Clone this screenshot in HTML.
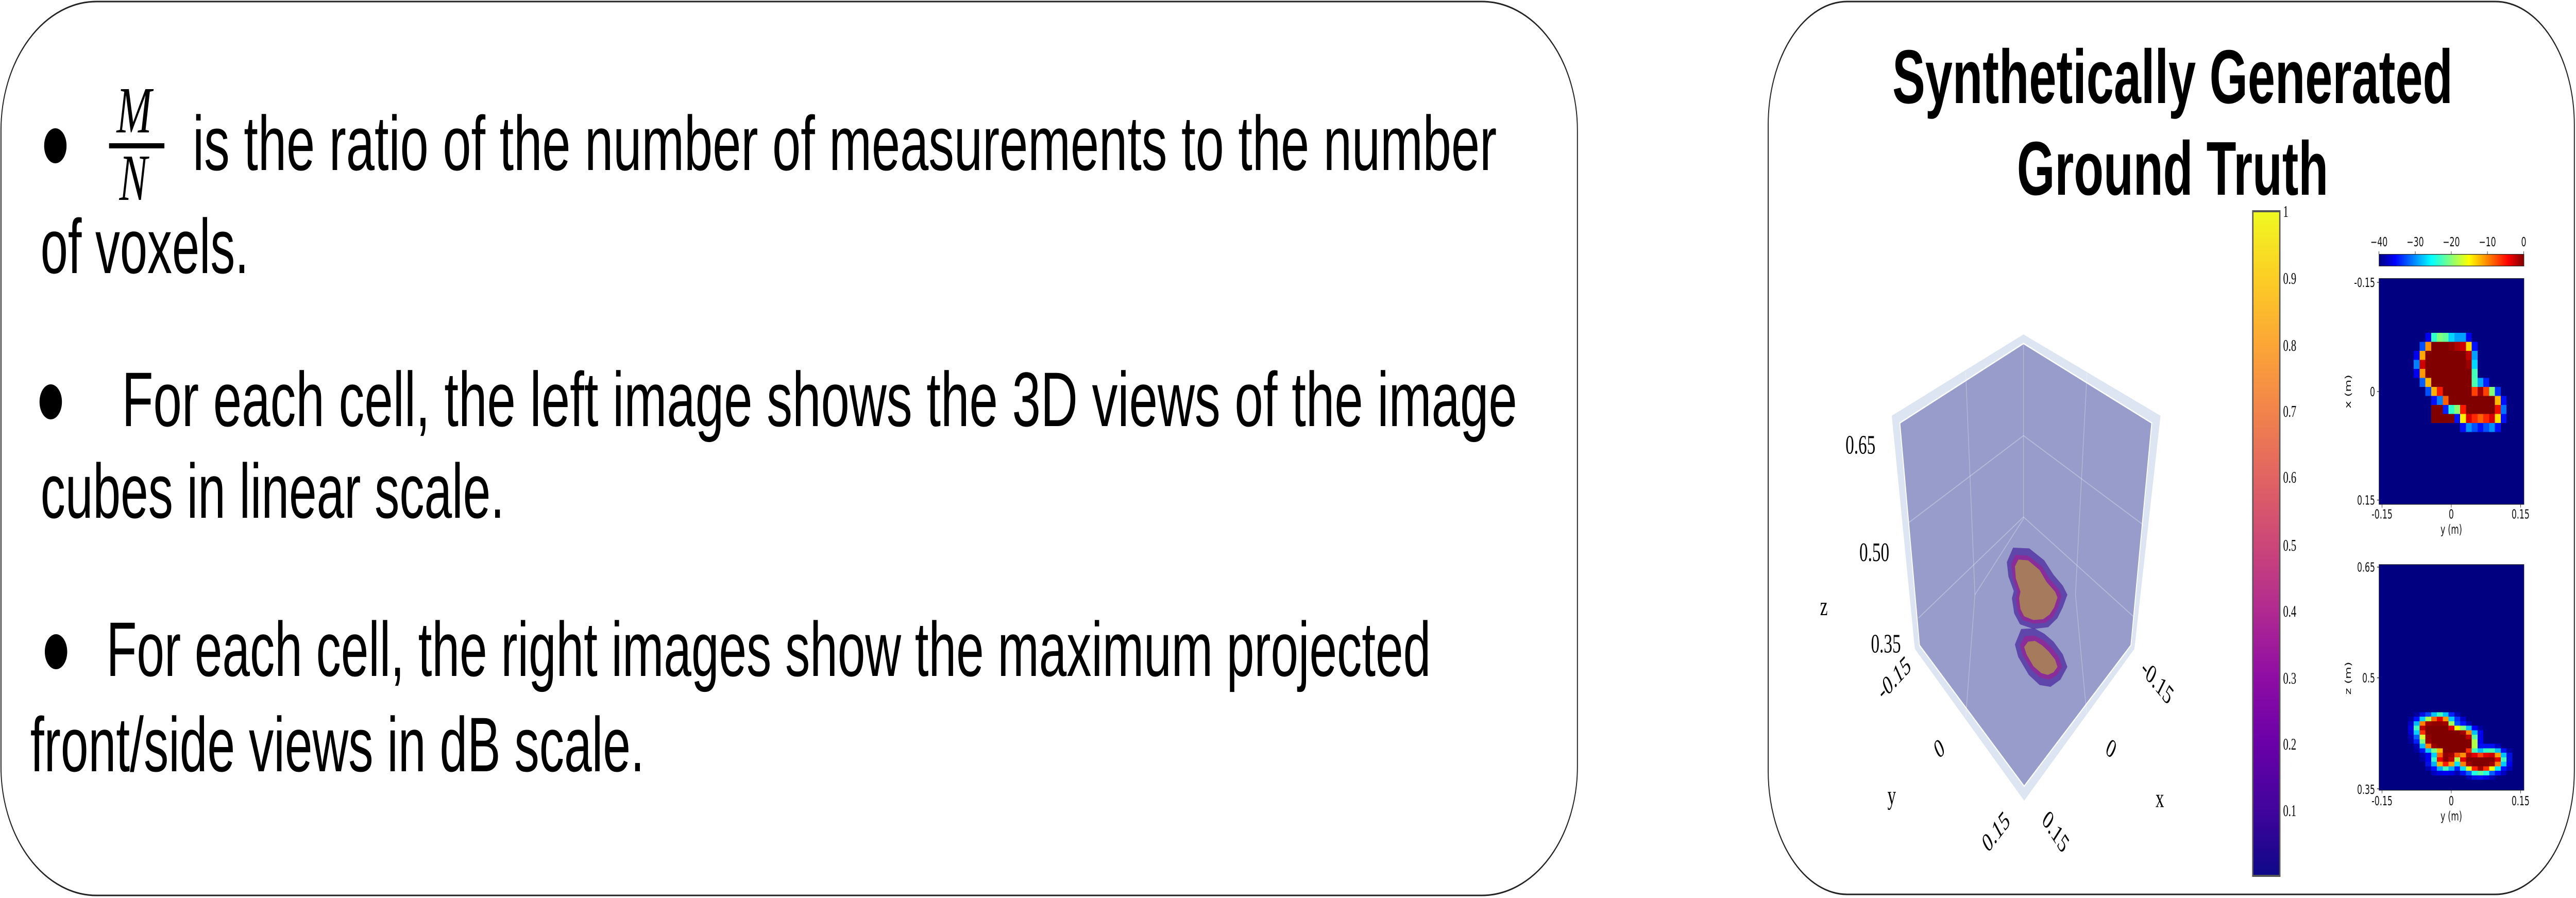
<!DOCTYPE html>
<html><head><meta charset="utf-8"><style>
html,body{margin:0;padding:0;background:#fff;width:100%;height:100%;overflow:hidden;}
svg text{font-family:"Liberation Sans",sans-serif;}
#root{display:block;width:100vw;height:100vh;}
</style></head><body>
<svg id="root" viewBox="0 0 7819 1743" preserveAspectRatio="none" xmlns="http://www.w3.org/2000/svg">
<defs>
<linearGradient id="plasma" x1="0" y1="1" x2="0" y2="0">
<stop offset="0" stop-color="#0d0887"/><stop offset=".1" stop-color="#41049d"/><stop offset=".2" stop-color="#6a00a8"/><stop offset=".3" stop-color="#8f0da4"/><stop offset=".4" stop-color="#b12a90"/><stop offset=".5" stop-color="#cc4778"/><stop offset=".6" stop-color="#e16462"/><stop offset=".7" stop-color="#f2844b"/><stop offset=".8" stop-color="#fca636"/><stop offset=".9" stop-color="#fcce25"/><stop offset="1" stop-color="#f0f921"/>
</linearGradient>
<linearGradient id="jet" x1="0" y1="0" x2="1" y2="0">
<stop offset="0" stop-color="#00007f"/><stop offset=".11" stop-color="#0000ff"/><stop offset=".36" stop-color="#00ffff"/><stop offset=".62" stop-color="#ffff00"/><stop offset=".89" stop-color="#ff0000"/><stop offset="1" stop-color="#7f0000"/>
</linearGradient>
</defs>
<rect width="7819" height="1743" fill="#fff"/>
<rect x="3" y="3" width="4785" height="1735" rx="290" ry="250" fill="#fff" stroke="#222" stroke-width="3"/>
<rect x="5367" y="3" width="2447" height="1733" rx="240" ry="240" fill="#fff" stroke="#222" stroke-width="3"/>

<!-- left text -->
<circle cx="168" cy="283" r="34" fill="#000"/>
<text x="354" y="257" font-size="128" font-style="italic" style="font-family:'Liberation Serif',serif">M</text>
<rect x="331" y="278" width="168" height="10" fill="#000"/>
<text x="362" y="388" font-size="128" font-style="italic" style="font-family:'Liberation Serif',serif">N</text>
<text x="585" y="330" font-size="150" textLength="3958" lengthAdjust="spacingAndGlyphs">is the ratio of the number of measurements to the number</text>
<text x="123" y="530" font-size="150" textLength="632" lengthAdjust="spacingAndGlyphs">of voxels.</text>
<circle cx="154" cy="780" r="34" fill="#000"/>
<text x="370" y="827" font-size="150" textLength="4235" lengthAdjust="spacingAndGlyphs">For each cell, the left image shows the 3D views of the image</text>
<text x="123" y="1005" font-size="150" textLength="1408" lengthAdjust="spacingAndGlyphs">cubes in linear scale.</text>
<circle cx="170" cy="1265" r="34" fill="#000"/>
<text x="323" y="1312" font-size="150" textLength="4020" lengthAdjust="spacingAndGlyphs">For each cell, the right images show the maximum projected</text>
<text x="92" y="1497" font-size="150" textLength="1864" lengthAdjust="spacingAndGlyphs">front/side views in dB scale.</text>

<!-- title -->
<text x="5744" y="200" font-size="148" font-weight="bold" textLength="1701" lengthAdjust="spacingAndGlyphs">Synthetically Generated</text>
<text x="6122" y="378" font-size="148" font-weight="bold" textLength="945" lengthAdjust="spacingAndGlyphs">Ground Truth</text>

<!-- plasma colorbar -->
<rect x="6838" y="410" width="82" height="1290" fill="url(#plasma)" stroke="#555" stroke-width="4"/>
<g font-size="32">
<text x="6930" y="421" style="font-family:'Liberation Serif',serif">1</text>
<text x="6930" y="551" style="font-family:'Liberation Serif',serif">0.9</text>
<text x="6930" y="681" style="font-family:'Liberation Serif',serif">0.8</text>
<text x="6930" y="809" style="font-family:'Liberation Serif',serif">0.7</text>
<text x="6930" y="937" style="font-family:'Liberation Serif',serif">0.6</text>
<text x="6930" y="1069" style="font-family:'Liberation Serif',serif">0.5</text>
<text x="6930" y="1197" style="font-family:'Liberation Serif',serif">0.4</text>
<text x="6930" y="1327" style="font-family:'Liberation Serif',serif">0.3</text>
<text x="6930" y="1455" style="font-family:'Liberation Serif',serif">0.2</text>
<text x="6930" y="1584" style="font-family:'Liberation Serif',serif">0.1</text>
</g>

<!-- cube -->
<svg x="5500" y="600" width="1100" height="1100" viewBox="0 0 1568 1568">
<polygon points="915,70 1508,295 1395,940 918,1360 445,940 345,295" fill="#dde5f2"/>
<polygon points="915,95 1470,315 1380,930 918,1320 465,930 380,315" fill="#979cca" stroke="#fff" stroke-width="4"/>
<g stroke="rgba(255,255,255,0.3)" stroke-width="3" fill="none">
<line x1="915" y1="95" x2="915" y2="580"/>
<line x1="665" y1="175" x2="705" y2="790"/>
<line x1="1190" y1="175" x2="1140" y2="790"/>
<line x1="915" y1="350" x2="420" y2="590"/>
<line x1="915" y1="350" x2="1440" y2="600"/>
<line x1="915" y1="575" x2="460" y2="855"/>
<line x1="915" y1="575" x2="1390" y2="850"/>
<line x1="705" y1="790" x2="915" y2="580"/>
<line x1="705" y1="790" x2="665" y2="1130"/>
<line x1="1140" y1="790" x2="1190" y2="1130"/>
</g>
<polygon points="870,660 940,662 1005,695 1045,735 1085,765 1105,790 1085,825 1062,855 1022,880 958,885 900,872 875,842 865,800 873,780 850,740 843,700" fill="#4b2aa0" opacity="0.75"/>
<polygon points="880,680 935,682 995,712 1030,748 1068,775 1080,795 1062,828 1042,852 1010,868 958,870 910,860 890,835 882,800 888,782 868,742 862,705" fill="#8a2d98"/>
<polygon points="893,693 935,695 985,722 1015,755 1052,782 1062,798 1048,825 1028,845 1000,858 958,860 918,850 902,830 896,800 902,782 882,745 878,712" fill="#a67a5c"/>
<polygon points="905,885 962,883 1005,898 1045,920 1085,955 1105,990 1075,1025 1032,1045 985,1040 938,1012 892,962 878,928" fill="#4b2aa0" opacity="0.75"/>
<polygon points="920,905 962,903 1000,915 1035,935 1068,962 1082,990 1060,1012 1028,1025 990,1020 950,998 912,958 900,930" fill="#8a2d98"/>
<polygon points="935,920 965,918 995,930 1025,948 1052,970 1062,990 1045,1005 1020,1012 992,1007 958,988 928,955 918,935" fill="#a67a5c"/>
<g font-size="74">
<text x="145" y="400" style="font-family:'Liberation Serif',serif">0.65</text>
<text x="205" y="697" style="font-family:'Liberation Serif',serif">0.50</text>
<text x="35" y="847" style="font-family:'Liberation Serif',serif">z</text>
<text x="255" y="950" style="font-family:'Liberation Serif',serif">0.35</text>
<text x="355" y="1045" text-anchor="middle" transform="rotate(-35 355 1020)" style="font-family:'Liberation Serif',serif">-0.15</text>
<text x="550" y="1240" text-anchor="middle" transform="rotate(-35 550 1215)" style="font-family:'Liberation Serif',serif">0</text>
<text x="345" y="1370" text-anchor="middle" style="font-family:'Liberation Serif',serif">y</text>
<text x="795" y="1470" text-anchor="middle" transform="rotate(-40 795 1445)" style="font-family:'Liberation Serif',serif">0.15</text>
<text x="1495" y="1055" text-anchor="middle" transform="rotate(38 1495 1030)" style="font-family:'Liberation Serif',serif">-0.15</text>
<text x="1295" y="1240" text-anchor="middle" transform="rotate(35 1295 1215)" style="font-family:'Liberation Serif',serif">0</text>
<text x="1505" y="1378" text-anchor="middle" style="font-family:'Liberation Serif',serif">x</text>
<text x="1055" y="1470" text-anchor="middle" transform="rotate(45 1055 1445)" style="font-family:'Liberation Serif',serif">0.15</text>
</g>
</svg>

<!-- heatmap 1 -->
<svg x="7080" y="440" width="620" height="620" viewBox="0 0 1560 1560">
<g font-size="62" fill="#111">
<text x="355" y="95" text-anchor="middle" style="font-family:'DejaVu Sans',sans-serif">−40</text>
<text x="632" y="95" text-anchor="middle" style="font-family:'DejaVu Sans',sans-serif">−30</text>
<text x="907" y="95" text-anchor="middle" style="font-family:'DejaVu Sans',sans-serif">−20</text>
<text x="1183" y="95" text-anchor="middle" style="font-family:'DejaVu Sans',sans-serif">−10</text>
<text x="1460" y="95" text-anchor="middle" style="font-family:'DejaVu Sans',sans-serif">0</text>
<text x="325" y="295" text-anchor="end" style="font-family:'DejaVu Sans',sans-serif">-0.15</text>
<text x="325" y="828" text-anchor="end" style="font-family:'DejaVu Sans',sans-serif">0</text>
<text x="325" y="1357" text-anchor="end" style="font-family:'DejaVu Sans',sans-serif">0.15</text>
<text x="378" y="1425" text-anchor="middle" style="font-family:'DejaVu Sans',sans-serif">-0.15</text>
<text x="907" y="1425" text-anchor="middle" style="font-family:'DejaVu Sans',sans-serif">0</text>
<text x="1436" y="1425" text-anchor="middle" style="font-family:'DejaVu Sans',sans-serif">0.15</text>
<text x="907" y="1500" text-anchor="middle" style="font-family:'DejaVu Sans',sans-serif">y (m)</text>
<text x="0" y="0" text-anchor="middle" transform="translate(140 805) rotate(-90)" style="font-family:'DejaVu Sans',sans-serif">x (m)</text>
</g>
<g stroke="#111" stroke-width="3"><line x1="355" y1="120" x2="355" y2="135"/><line x1="632" y1="120" x2="632" y2="135"/><line x1="907" y1="120" x2="907" y2="135"/><line x1="1183" y1="120" x2="1183" y2="135"/><line x1="1460" y1="120" x2="1460" y2="135"/>
<line x1="340" y1="272" x2="355" y2="272"/><line x1="340" y1="805" x2="355" y2="805"/><line x1="340" y1="1335" x2="355" y2="1335"/>
<line x1="378" y1="1357" x2="378" y2="1372"/><line x1="907" y1="1357" x2="907" y2="1372"/><line x1="1436" y1="1357" x2="1436" y2="1372"/></g>
<rect x="355" y="135" width="1107" height="57" fill="url(#jet)" stroke="#222" stroke-width="3"/>
<svg x="355" y="253" width="1107" height="1103" viewBox="0 0 25 25" preserveAspectRatio="none" shape-rendering="crispEdges">
<rect width="25" height="25" fill="#000080"/>
<rect x="9" y="7" width="6" height="9" fill="#800000"/><rect x="15" y="12" width="5" height="3" fill="#800000"/>
<rect x="8" y="6" width="1" height="1" fill="#0000f0"/><rect x="9" y="6" width="1" height="1" fill="#2fffc8"/><rect x="10" y="6" width="1" height="1" fill="#7fff7f"/><rect x="11" y="6" width="1" height="1" fill="#60ff9a"/><rect x="12" y="6" width="1" height="1" fill="#00d4ff"/><rect x="13" y="6" width="2" height="1" fill="#00a0ff"/><rect x="15" y="6" width="1" height="1" fill="#0000f0"/>
<rect x="7" y="7" width="1" height="1" fill="#0050ff"/><rect x="8" y="7" width="1" height="1" fill="#ff9000"/><rect x="12" y="7" width="1" height="1" fill="#900000"/><rect x="13" y="7" width="1" height="1" fill="#b00000"/><rect x="14" y="7" width="1" height="1" fill="#d00000"/><rect x="15" y="7" width="1" height="1" fill="#ffd800"/><rect x="16" y="7" width="1" height="1" fill="#0010ff"/>
<rect x="6" y="8" width="1" height="1" fill="#0000f0"/><rect x="7" y="8" width="1" height="1" fill="#ffa800"/><rect x="8" y="8" width="1" height="3" fill="#800000"/><rect x="15" y="8" width="1" height="1" fill="#c00000"/><rect x="16" y="8" width="1" height="1" fill="#00a0ff"/>
<rect x="6" y="9" width="1" height="1" fill="#0080ff"/><rect x="7" y="9" width="1" height="1" fill="#d00000"/><rect x="15" y="9" width="1" height="1" fill="#9a0000"/><rect x="16" y="9" width="1" height="1" fill="#00d8ff"/>
<rect x="6" y="10" width="1" height="1" fill="#0000f0"/><rect x="7" y="10" width="1" height="1" fill="#ff9800"/><rect x="15" y="10" width="1" height="2" fill="#800000"/><rect x="16" y="10" width="1" height="1" fill="#40ffb8"/>
<rect x="7" y="11" width="1" height="1" fill="#0060ff"/><rect x="8" y="11" width="1" height="1" fill="#ffb800"/><rect x="16" y="11" width="1" height="1" fill="#48ffb0"/><rect x="17" y="11" width="1" height="1" fill="#00a0ff"/><rect x="18" y="11" width="1" height="1" fill="#0020ff"/>
<rect x="8" y="12" width="1" height="1" fill="#0050ff"/><rect x="9" y="12" width="1" height="1" fill="#ffb000"/><rect x="10" y="12" width="1" height="1" fill="#ff1800"/><rect x="11" y="12" width="5" height="1" fill="#800000"/><rect x="16" y="12" width="1" height="1" fill="#ff4000"/><rect x="17" y="12" width="1" height="1" fill="#a00000"/><rect x="18" y="12" width="1" height="1" fill="#ff4000"/><rect x="19" y="12" width="1" height="1" fill="#80ff78"/><rect x="20" y="12" width="1" height="1" fill="#0030ff"/>
<rect x="9" y="13" width="1" height="1" fill="#0010ff"/><rect x="10" y="13" width="1" height="1" fill="#0080ff"/><rect x="11" y="13" width="1" height="1" fill="#ff6000"/><rect x="12" y="13" width="8" height="1" fill="#800000"/><rect x="20" y="13" width="1" height="1" fill="#ffb800"/><rect x="21" y="13" width="1" height="1" fill="#0010ff"/>
<rect x="11" y="14" width="1" height="1" fill="#0020ff"/><rect x="12" y="14" width="1" height="1" fill="#30ffc8"/><rect x="13" y="14" width="1" height="1" fill="#88ff70"/><rect x="14" y="14" width="1" height="1" fill="#ff1800"/><rect x="15" y="14" width="5" height="1" fill="#800000"/><rect x="20" y="14" width="1" height="1" fill="#f01000"/><rect x="21" y="14" width="1" height="1" fill="#0070ff"/>
<rect x="13" y="15" width="1" height="1" fill="#0010ff"/><rect x="14" y="15" width="1" height="1" fill="#fff000"/><rect x="15" y="15" width="1" height="1" fill="#d80000"/><rect x="16" y="15" width="1" height="1" fill="#ff2800"/><rect x="17" y="15" width="1" height="1" fill="#ff6000"/><rect x="18" y="15" width="1" height="1" fill="#ff2800"/><rect x="19" y="15" width="1" height="1" fill="#d80000"/><rect x="20" y="15" width="1" height="1" fill="#ffe000"/><rect x="21" y="15" width="1" height="1" fill="#0010ff"/>
<rect x="14" y="16" width="1" height="1" fill="#0010ff"/><rect x="15" y="16" width="1" height="1" fill="#0090ff"/><rect x="16" y="16" width="1" height="1" fill="#0050ff"/><rect x="17" y="16" width="1" height="1" fill="#0010ff"/><rect x="18" y="16" width="1" height="1" fill="#0050ff"/><rect x="19" y="16" width="1" height="1" fill="#0090ff"/><rect x="20" y="16" width="1" height="1" fill="#0010ff"/>
</svg>
<rect x="355" y="253" width="1107" height="1103" fill="none" stroke="#222" stroke-width="3"/>
</svg>

<!-- heatmap 2 -->
<svg x="7080" y="1070" width="620" height="620" viewBox="0 0 1560 1560">
<g font-size="62" fill="#111">
<text x="325" y="100" text-anchor="end" style="font-family:'DejaVu Sans',sans-serif">0.65</text>
<text x="325" y="640" text-anchor="end" style="font-family:'DejaVu Sans',sans-serif">0.5</text>
<text x="325" y="1185" text-anchor="end" style="font-family:'DejaVu Sans',sans-serif">0.35</text>
<text x="378" y="1240" text-anchor="middle" style="font-family:'DejaVu Sans',sans-serif">-0.15</text>
<text x="907" y="1240" text-anchor="middle" style="font-family:'DejaVu Sans',sans-serif">0</text>
<text x="1436" y="1240" text-anchor="middle" style="font-family:'DejaVu Sans',sans-serif">0.15</text>
<text x="907" y="1315" text-anchor="middle" style="font-family:'DejaVu Sans',sans-serif">y (m)</text>
<text x="0" y="0" text-anchor="middle" transform="translate(140 620) rotate(-90)" style="font-family:'DejaVu Sans',sans-serif">z (m)</text>
</g>
<g stroke="#111" stroke-width="3"><line x1="340" y1="77" x2="355" y2="77"/><line x1="340" y1="618" x2="355" y2="618"/><line x1="340" y1="1160" x2="355" y2="1160"/>
<line x1="378" y1="1167" x2="378" y2="1182"/><line x1="907" y1="1167" x2="907" y2="1182"/><line x1="1436" y1="1167" x2="1436" y2="1182"/></g>
<svg x="355" y="65" width="1107" height="1102" viewBox="0 0 25 50" preserveAspectRatio="none" shape-rendering="crispEdges">
<rect width="25" height="50" fill="#000080"/>
<g transform="translate(0,32.7)">
<rect x="6" y="0" width="1" height="1" fill="#0000a0"/><rect x="7" y="0" width="1" height="1" fill="#0010e0"/><rect x="8" y="0" width="1" height="1" fill="#0040ff"/><rect x="9" y="0" width="1" height="1" fill="#00c8ff"/><rect x="10" y="0" width="1" height="1" fill="#40ffb8"/><rect x="11" y="0" width="1" height="1" fill="#00c0ff"/><rect x="12" y="0" width="1" height="1" fill="#0020ff"/><rect x="13" y="0" width="1" height="1" fill="#0000b0"/>
<rect x="5" y="1" width="1" height="1" fill="#0000a0"/><rect x="6" y="1" width="1" height="1" fill="#0010ff"/><rect x="7" y="1" width="1" height="1" fill="#00d0ff"/><rect x="8" y="1" width="1" height="1" fill="#a8ff50"/><rect x="9" y="1" width="1" height="1" fill="#ff6000"/><rect x="10" y="1" width="1" height="1" fill="#e00000"/><rect x="11" y="1" width="1" height="1" fill="#ff9800"/><rect x="12" y="1" width="1" height="1" fill="#00c8ff"/><rect x="13" y="1" width="1" height="1" fill="#0030ff"/><rect x="14" y="1" width="1" height="1" fill="#0000c8"/>
<rect x="5" y="2" width="1" height="1" fill="#0000c8"/><rect x="6" y="2" width="1" height="1" fill="#00b8ff"/><rect x="7" y="2" width="1" height="1" fill="#ff8000"/><rect x="8" y="2" width="1" height="1" fill="#a00000"/><rect x="9" y="2" width="2" height="1" fill="#900000"/><rect x="11" y="2" width="1" height="1" fill="#a00000"/><rect x="12" y="2" width="1" height="1" fill="#a0ff58"/><rect x="13" y="2" width="1" height="1" fill="#0050ff"/><rect x="14" y="2" width="1" height="1" fill="#0010ff"/><rect x="15" y="2" width="1" height="1" fill="#0000b0"/>
<rect x="5" y="3" width="1" height="1" fill="#0000e0"/><rect x="6" y="3" width="1" height="1" fill="#40ffb8"/><rect x="7" y="3" width="1" height="1" fill="#c00000"/><rect x="8" y="3" width="4" height="1" fill="#800000"/><rect x="12" y="3" width="1" height="1" fill="#e00000"/><rect x="13" y="3" width="1" height="1" fill="#f0ff00"/><rect x="14" y="3" width="1" height="1" fill="#80ff78"/><rect x="15" y="3" width="1" height="1" fill="#00c0ff"/><rect x="16" y="3" width="1" height="1" fill="#0000ff"/><rect x="17" y="3" width="1" height="1" fill="#0000a0"/>
<rect x="5" y="4" width="1" height="1" fill="#0000d0"/><rect x="6" y="4" width="1" height="1" fill="#00d0ff"/><rect x="7" y="4" width="1" height="1" fill="#ff3000"/><rect x="8" y="4" width="6" height="4" fill="#800000"/><rect x="14" y="4" width="1" height="1" fill="#a00000"/><rect x="15" y="4" width="1" height="1" fill="#ff8800"/><rect x="16" y="4" width="1" height="1" fill="#00c0ff"/><rect x="17" y="4" width="1" height="1" fill="#0000f0"/>
<rect x="5" y="5" width="1" height="1" fill="#0000b0"/><rect x="6" y="5" width="1" height="1" fill="#0060ff"/><rect x="7" y="5" width="1" height="1" fill="#d8ff30"/><rect x="8" y="5" width="1" height="1" fill="#900000"/><rect x="14" y="5" width="1" height="3" fill="#800000"/><rect x="15" y="5" width="1" height="1" fill="#c00000"/><rect x="16" y="5" width="1" height="1" fill="#58ffa0"/><rect x="17" y="5" width="1" height="1" fill="#0000f0"/>
<rect x="5" y="6" width="1" height="1" fill="#0000a0"/><rect x="6" y="6" width="1" height="1" fill="#0020ff"/><rect x="7" y="6" width="1" height="1" fill="#78ff80"/><rect x="8" y="6" width="1" height="1" fill="#a00000"/><rect x="15" y="6" width="1" height="2" fill="#800000"/><rect x="16" y="6" width="1" height="2" fill="#b0ff48"/><rect x="17" y="6" width="1" height="1" fill="#0000f0"/>
<rect x="6" y="7" width="1" height="1" fill="#0000b0"/><rect x="7" y="7" width="1" height="1" fill="#00c0ff"/><rect x="8" y="7" width="1" height="1" fill="#ff8000"/><rect x="9" y="7" width="1" height="1" fill="#9a0000"/><rect x="17" y="7" width="3" height="1" fill="#0010f0"/><rect x="20" y="7" width="1" height="1" fill="#0000c0"/>
<rect x="6" y="8" width="1" height="1" fill="#0000a0"/><rect x="7" y="8" width="1" height="1" fill="#0010ff"/><rect x="8" y="8" width="1" height="1" fill="#00c8ff"/><rect x="9" y="8" width="1" height="1" fill="#78ff80"/><rect x="10" y="8" width="1" height="1" fill="#ffb800"/><rect x="11" y="8" width="4" height="1" fill="#800000"/><rect x="15" y="8" width="1" height="1" fill="#ff3000"/><rect x="16" y="8" width="1" height="1" fill="#40ffb8"/><rect x="17" y="8" width="1" height="1" fill="#00c0ff"/><rect x="18" y="8" width="1" height="1" fill="#30ffc8"/><rect x="19" y="8" width="1" height="1" fill="#48ffb0"/><rect x="20" y="8" width="1" height="1" fill="#00c0ff"/><rect x="21" y="8" width="1" height="1" fill="#0010ff"/><rect x="22" y="8" width="1" height="1" fill="#0000a0"/>
<rect x="7" y="9" width="1" height="1" fill="#0000b0"/><rect x="8" y="9" width="1" height="1" fill="#0000f0"/><rect x="9" y="9" width="1" height="1" fill="#00d0ff"/><rect x="10" y="9" width="1" height="1" fill="#ff6000"/><rect x="11" y="9" width="1" height="1" fill="#900000"/><rect x="12" y="9" width="1" height="1" fill="#a00000"/><rect x="13" y="9" width="1" height="1" fill="#ff5000"/><rect x="14" y="9" width="1" height="1" fill="#ff9000"/><rect x="15" y="9" width="1" height="1" fill="#b00000"/><rect x="16" y="9" width="1" height="1" fill="#e00000"/><rect x="17" y="9" width="1" height="1" fill="#ff4000"/><rect x="18" y="9" width="1" height="1" fill="#e00000"/><rect x="19" y="9" width="1" height="1" fill="#c80000"/><rect x="20" y="9" width="1" height="1" fill="#ffa000"/><rect x="21" y="9" width="1" height="1" fill="#00c0ff"/><rect x="22" y="9" width="1" height="1" fill="#0010e0"/>
<rect x="7" y="10" width="1" height="1" fill="#0000a0"/><rect x="8" y="10" width="1" height="1" fill="#0000f0"/><rect x="9" y="10" width="1" height="1" fill="#30ffc8"/><rect x="10" y="10" width="1" height="1" fill="#f00000"/><rect x="11" y="10" width="1" height="1" fill="#880000"/><rect x="12" y="10" width="1" height="1" fill="#c00000"/><rect x="13" y="10" width="1" height="1" fill="#a8ff50"/><rect x="14" y="10" width="1" height="1" fill="#e00000"/><rect x="15" y="10" width="5" height="1" fill="#850000"/><rect x="20" y="10" width="1" height="1" fill="#e00000"/><rect x="21" y="10" width="1" height="1" fill="#40ffb8"/><rect x="22" y="10" width="1" height="1" fill="#0010e0"/>
<rect x="8" y="11" width="1" height="1" fill="#0010e0"/><rect x="9" y="11" width="1" height="1" fill="#00b0ff"/><rect x="10" y="11" width="1" height="1" fill="#ffb000"/><rect x="11" y="11" width="1" height="1" fill="#ff1800"/><rect x="12" y="11" width="1" height="1" fill="#ffa000"/><rect x="13" y="11" width="1" height="1" fill="#00e0ff"/><rect x="14" y="11" width="1" height="1" fill="#ff8000"/><rect x="15" y="11" width="1" height="1" fill="#a00000"/><rect x="16" y="11" width="3" height="1" fill="#800000"/><rect x="19" y="11" width="1" height="1" fill="#a00000"/><rect x="20" y="11" width="1" height="1" fill="#ff8000"/><rect x="21" y="11" width="1" height="1" fill="#00c8ff"/><rect x="22" y="11" width="1" height="1" fill="#0000f0"/>
<rect x="8" y="12" width="1" height="1" fill="#0000b0"/><rect x="9" y="12" width="1" height="1" fill="#0010ff"/><rect x="10" y="12" width="1" height="1" fill="#00b0ff"/><rect x="11" y="12" width="1" height="1" fill="#40ffb8"/><rect x="12" y="12" width="1" height="1" fill="#00b0ff"/><rect x="13" y="12" width="1" height="1" fill="#0020ff"/><rect x="14" y="12" width="1" height="1" fill="#00e0ff"/><rect x="15" y="12" width="1" height="1" fill="#e0ff20"/><rect x="16" y="12" width="1" height="1" fill="#ff2000"/><rect x="17" y="12" width="1" height="1" fill="#a00000"/><rect x="18" y="12" width="1" height="1" fill="#ff3000"/><rect x="19" y="12" width="1" height="1" fill="#e8ff10"/><rect x="20" y="12" width="1" height="1" fill="#00e8ff"/><rect x="21" y="12" width="1" height="1" fill="#0010ff"/><rect x="22" y="12" width="1" height="1" fill="#0000c0"/>
<rect x="9" y="13" width="1" height="1" fill="#0000c0"/><rect x="10" y="13" width="1" height="1" fill="#0000e0"/><rect x="11" y="13" width="1" height="1" fill="#0000f0"/><rect x="12" y="13" width="1" height="1" fill="#0000e0"/><rect x="13" y="13" width="1" height="1" fill="#0000b0"/><rect x="14" y="13" width="1" height="1" fill="#0010f0"/><rect x="15" y="13" width="1" height="1" fill="#0060ff"/><rect x="16" y="13" width="1" height="1" fill="#20ffe0"/><rect x="17" y="13" width="1" height="1" fill="#58ffa0"/><rect x="18" y="13" width="1" height="1" fill="#20ffe0"/><rect x="19" y="13" width="1" height="1" fill="#0060ff"/><rect x="20" y="13" width="1" height="1" fill="#0010ff"/><rect x="21" y="13" width="1" height="1" fill="#0000c0"/>
<rect x="15" y="14" width="1" height="1" fill="#0000b0"/><rect x="16" y="14" width="1" height="1" fill="#0010e0"/><rect x="17" y="14" width="1" height="1" fill="#0010f0"/><rect x="18" y="14" width="1" height="1" fill="#0000e0"/><rect x="19" y="14" width="1" height="1" fill="#0000b0"/>
</g>
</svg>
<rect x="355" y="65" width="1107" height="1102" fill="none" stroke="#222" stroke-width="3"/>
</svg>
</svg>
</body></html>
